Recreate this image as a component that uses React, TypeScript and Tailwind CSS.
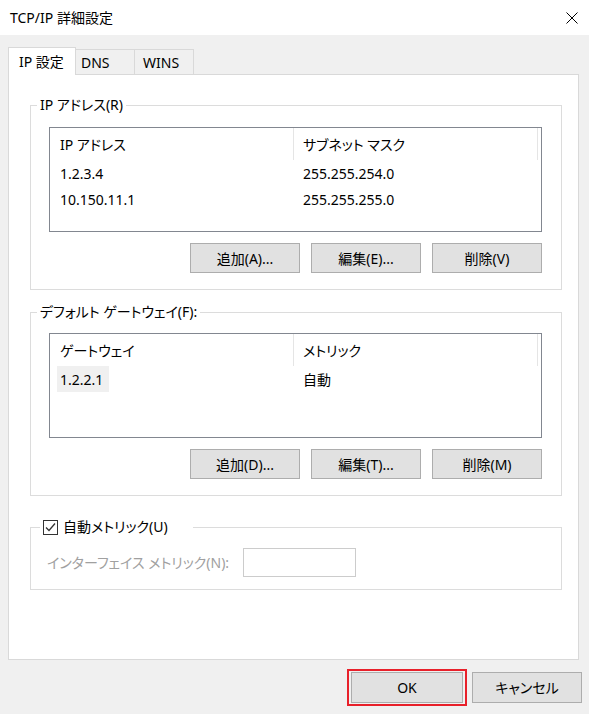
import React from "react";

const font =
  "font-['Noto_Sans','Noto_Sans_CJK_JP',sans-serif] [font-feature-settings:'palt'] text-[14px] text-black";

function Btn({ children, className = "" }: { children: React.ReactNode; className?: string }) {
  return (
    <button
      type="button"
      className={`h-[30px] w-[110px] flex items-center justify-center bg-[#e1e1e1] border border-[#adadad] ${className}`}
    >
      {children}
    </button>
  );
}

type ListProps = {
  head: [string, string];
  rows: [string, string][];
  highlightFirst?: boolean;
};

function ListView({ head, rows, highlightFirst }: ListProps) {
  return (
    <div className="h-[105px] border border-[#828790] bg-white">
      <div className="flex h-[32px]">
        <div className="w-[244px] pl-[10px] flex items-center border-r border-[#e5e5e5]">{head[0]}</div>
        <div className="w-[244px] pl-[9px] flex items-center border-r border-[#e5e5e5]">{head[1]}</div>
      </div>
      {rows.map((r, i) => (
        <div key={i} className="flex h-[26px]">
          {highlightFirst && i === 0 ? (
            <div className="w-[244px] pl-[7px] flex">
              <span className="w-[52px] pl-[3px] flex items-center bg-[#f0f0f0]">{r[0]}</span>
            </div>
          ) : (
            <div className="w-[244px] pl-[10px] flex items-center">{r[0]}</div>
          )}
          <div className="w-[244px] pl-[9px] flex items-center">{r[1]}</div>
        </div>
      ))}
    </div>
  );
}

function Group({
  legend,
  className = "",
  children,
}: {
  legend: string;
  className?: string;
  children: React.ReactNode;
}) {
  return (
    <fieldset className={`border border-[#dcdcdc] ${className}`}>
      <legend className="ml-[6px] px-[3px] leading-[20px]">{legend}</legend>
      {children}
    </fieldset>
  );
}

function Buttons({ labels }: { labels: string[] }) {
  return (
    <div className="mt-[11px] flex justify-end gap-[11px]">
      {labels.map((l) => (
        <Btn key={l}>{l}</Btn>
      ))}
    </div>
  );
}

export default function App() {
  return (
    <div className={`w-[589px] h-[714px] flex flex-col bg-[#f0f0f0] ${font}`}>
      {/* タイトルバー */}
      <div className="h-[35px] shrink-0 bg-white flex items-center justify-between pl-[10px] pr-[11px]">
        <span>TCP/IP 詳細設定</span>
        <svg width="12" height="12" viewBox="0 0 12 12" className="text-black">
          <path d="M0.5 0.5L11.5 11.5M11.5 0.5L0.5 11.5" stroke="currentColor" strokeWidth="1" />
        </svg>
      </div>

      {/* タブ */}
      <div className="mt-[12px] h-[27px] flex items-end pl-[8px]">
        <div className="relative z-10 h-[28px] -mb-[1px] w-[68px] pl-[10px] flex items-center bg-white border-l border-t border-r border-[#d9d9d9]">
          IP 設定
        </div>
        <div className="h-[25px] w-[59px] pl-[5px] flex items-center border-t border-r border-[#d9d9d9]">
          DNS
        </div>
        <div className="h-[25px] w-[59px] pl-[8px] flex items-center border-t border-r border-[#d9d9d9]">
          WINS
        </div>
      </div>

      {/* パネル */}
      <div className="flex-1 ml-[8px] mr-[10px] bg-white border border-[#d9d9d9] pl-[21px] pr-[16px]">
        <Group legend="IP アドレス(R)" className="mt-[20px]">
          <div className="pl-[18px] pr-[19px] pt-[12px] pb-[16px]">
            <ListView
              head={["IP アドレス", "サブネット マスク"]}
              rows={[
                ["1.2.3.4", "255.255.254.0"],
                ["10.150.11.1", "255.255.255.0"],
              ]}
            />
            <Buttons labels={["追加(A)...", "編集(E)...", "削除(V)"]} />
          </div>
        </Group>

        <Group legend="デフォルト ゲートウェイ(F):" className="mt-[12px]">
          <div className="pl-[18px] pr-[19px] pt-[11px] pb-[16px]">
            <ListView head={["ゲートウェイ", "メトリック"]} rows={[["1.2.2.1", "自動"]]} highlightFirst />
            <Buttons labels={["追加(D)...", "編集(T)...", "削除(M)"]} />
          </div>
        </Group>

        <fieldset className="mt-[21px] border border-[#dcdcdc]">
          <legend className="ml-[9px] pl-[3px] pr-[25px] leading-[20px]">
            <span className="flex items-center gap-[5px]">
              <svg width="15" height="15" viewBox="0 0 15 15">
                <rect x="0.5" y="0.5" width="14" height="14" fill="white" stroke="#333333" />
                <path d="M3 7.5L6 10.5L12 3.5" fill="none" stroke="#333333" strokeWidth="1.3" />
              </svg>
              自動メトリック(U)
            </span>
          </legend>
          <div className="flex items-center pl-[16px] pt-[11px] pb-[12px]">
            <span className="w-[196px] text-[#a0a0a0]">インターフェイス メトリック(N):</span>
            <div className="w-[113px] h-[29px] border border-[#cccccc] bg-white" />
          </div>
        </fieldset>
      </div>

      {/* フッター */}
      <div className="h-[54px] shrink-0 flex items-center justify-end gap-[5px] pr-[7px]">
        <div className="border-2 border-[#e8202a] px-[2px] py-[1px]">
          <Btn className="w-[112px] h-[31px]">OK</Btn>
        </div>
        <Btn className="h-[31px]">キャンセル</Btn>
      </div>
    </div>
  );
}
